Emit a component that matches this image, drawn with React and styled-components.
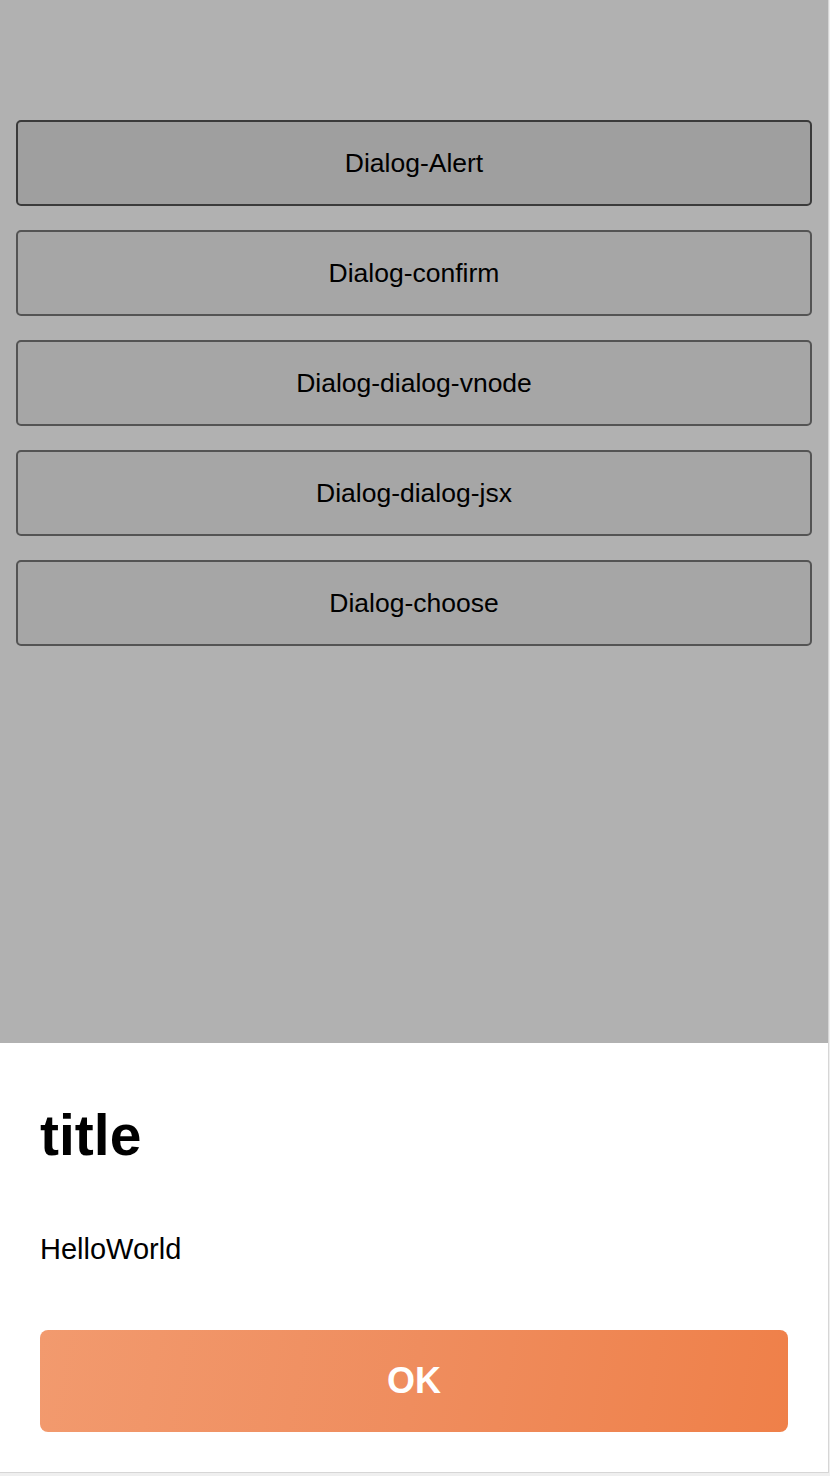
import React from "react";
import styled, { createGlobalStyle } from "styled-components";

const GlobalStyle = createGlobalStyle`
  html, body {
    margin: 0;
    padding: 0;
    background: #efefef;
  }
  body {
    font-family: "Liberation Sans", Arial, sans-serif;
  }
`;

const Page = styled.div`
  position: relative;
  width: 828px;
  height: 1472px;
  background: #ffffff;
  border-right: 1px solid #d6d6d6;
  border-bottom: 1px solid #d6d6d6;
  overflow: hidden;
`;

const List = styled.div`
  display: flex;
  flex-direction: column;
  gap: 24px;
  padding: 120px 16px 0;
`;

const DemoButton = styled.button`
  height: 86px;
  width: 100%;
  margin: 0;
  font-family: "Liberation Sans", Arial, sans-serif;
  font-size: 26.5px;
  color: #000;
  background: ${(p) => (p.$focused ? "#e5e5e5" : "#efefef")};
  border: 2px solid ${(p) => (p.$focused ? "#565656" : "#7a7a7a")};
  border-radius: 5px;
`;

const Mask = styled.div`
  position: absolute;
  inset: 0;
  background: rgba(0, 0, 0, 0.306);
`;

const Sheet = styled.div`
  position: absolute;
  left: 0;
  right: 0;
  bottom: 0;
  height: 429px;
  box-sizing: border-box;
  background: #ffffff;
  padding: 64px 40px 40px;
  display: flex;
  flex-direction: column;
`;

const Title = styled.h2`
  margin: 0;
  font-size: 57px;
  line-height: 1;
  font-weight: 700;
  color: #000;
`;

const Content = styled.p`
  margin: 71px 0 0;
  font-size: 29px;
  line-height: 1;
  color: #000;
`;

const OkButton = styled.button`
  margin-top: auto;
  height: 102px;
  width: 100%;
  border: none;
  border-radius: 8px;
  background: linear-gradient(100deg, #f29a6e 0%, #ef8d5e 50%, #ef8049 100%);
  color: #ffffff;
  font-family: "Liberation Sans", Arial, sans-serif;
  font-size: 36px;
  font-weight: 700;
`;

const demos = [
  "Dialog-Alert",
  "Dialog-confirm",
  "Dialog-dialog-vnode",
  "Dialog-dialog-jsx",
  "Dialog-choose",
];

const App = () => {
  return (
    <>
      <GlobalStyle />
      <Page>
        <List>
          {demos.map((name, i) => (
            <DemoButton key={name} $focused={i === 0}>
              {name}
            </DemoButton>
          ))}
        </List>
        <Mask />
        <Sheet>
          <Title>title</Title>
          <Content>HelloWorld</Content>
          <OkButton>OK</OkButton>
        </Sheet>
      </Page>
    </>
  );
};

export default App;
